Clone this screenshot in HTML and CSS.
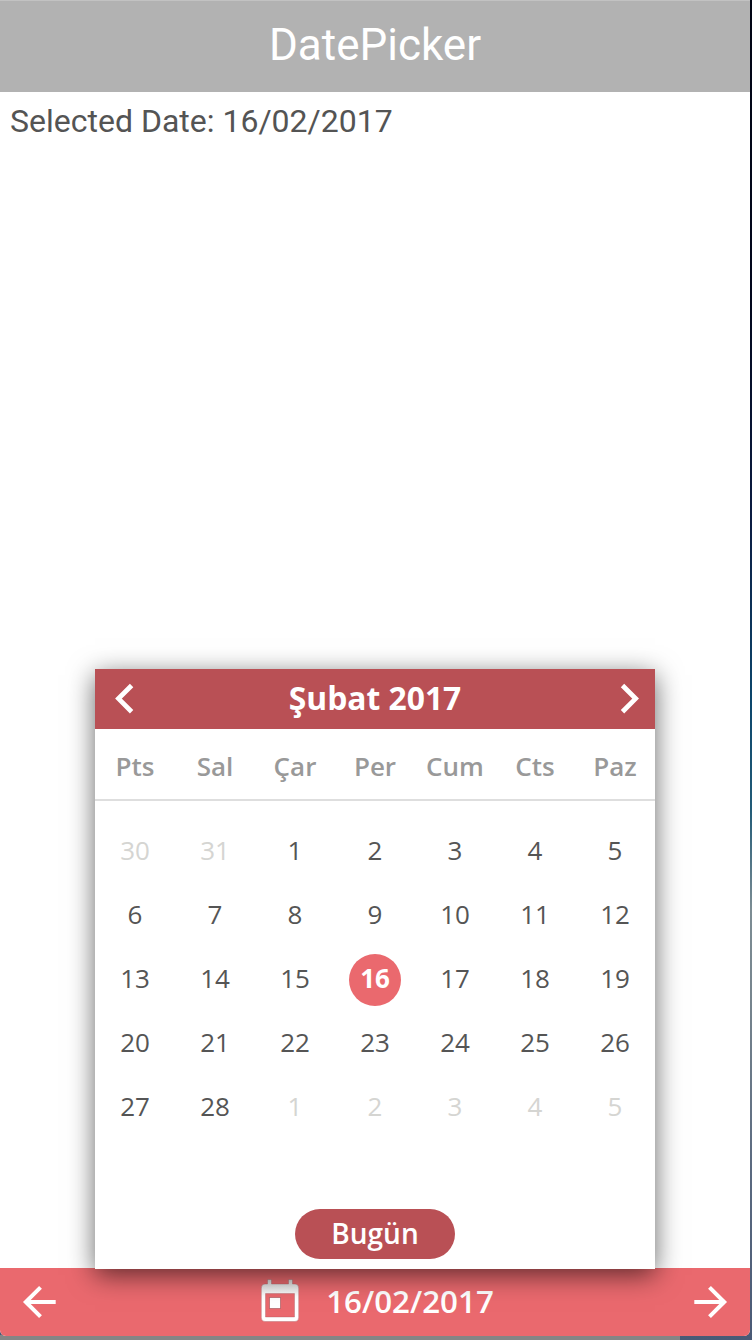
FILE: index.html
```html
<!DOCTYPE html>
<html lang="tr">
<head>
<meta charset="utf-8">
<title>DatePicker</title>
<link rel="stylesheet" href="styles.css">
</head>
<body>
<div class="window">
  <header class="titlebar">DatePicker</header>
  <main class="content"><span class="selected">Selected Date: 16/02/2017</span></main>
  <footer class="toolbar">
    <svg class="arrow" viewBox="0 0 36 36"><path d="M34.700 18H4.800M19.500 3.300 4.800 18l14.700 14.700"/></svg>
    <div class="current">
      <svg class="calendar-icon" viewBox="0 0 38 43">
        <defs><linearGradient id="shade" x1="0" y1="0" x2="0" y2="1"><stop offset="0" stop-color="#d8d8d8"/><stop offset=".4" stop-color="#fff"/></linearGradient></defs>
        <path fill="url(#shade)" stroke="#9c5055" stroke-opacity=".55" stroke-width=".6" fill-rule="evenodd" d="M4 5H6.500V.5H10.500V5H27.500V.5H31.500V5H34Q37.700 5 37.700 9V38.500Q37.700 42.500 34 42.500H4Q.3 42.500 .3 38.500V9Q.3 5 4 5ZM4.500 14.500V38H33.500V14.500Z"/>
        <rect x="8.500" y="18.500" width="11" height="11" fill="#fff" stroke="#9c5055" stroke-opacity=".6"/>
      </svg>
      <span class="current-date">16/02/2017</span>
    </div>
    <svg class="arrow" viewBox="0 0 36 36"><path d="M1.300 18H31.200M16.500 3.300 31.200 18 16.500 32.700"/></svg>
  </footer>
  <section class="popup">
    <div class="month">
      <svg class="chevron" viewBox="0 0 20 30"><path d="M18.600 1.500 5.500 14.600 18.600 27.700"/></svg>
      <span class="month-name">Şubat 2017</span>
      <svg class="chevron" viewBox="0 0 20 30"><path d="M5.500 1.500 18.600 14.600 5.500 27.700"/></svg>
    </div>
    <div class="weekdays"><span>Pts</span><span>Sal</span><span>Çar</span><span>Per</span><span>Cum</span><span>Cts</span><span>Paz</span></div>
    <div class="days">
      <span class="other">30</span><span class="other">31</span><span>1</span><span>2</span><span>3</span><span>4</span><span>5</span>
      <span>6</span><span>7</span><span>8</span><span>9</span><span>10</span><span>11</span><span>12</span>
      <span>13</span><span>14</span><span>15</span><span class="active">16</span><span>17</span><span>18</span><span>19</span>
      <span>20</span><span>21</span><span>22</span><span>23</span><span>24</span><span>25</span><span>26</span>
      <span>27</span><span>28</span><span class="other">1</span><span class="other">2</span><span class="other">3</span><span class="other">4</span><span class="other">5</span>
    </div>
    <button class="today">Bugün</button>
  </section>
</div>
</body>
</html>
```
FILE: styles.css
```css
* { box-sizing: border-box; }
body {
  margin: 0;
  width: 752px;
  height: 1340px;
  overflow: hidden;
  font-family: "Open Sans", "Noto Sans", sans-serif;
  background:
    linear-gradient(90deg, #858585 680px, transparent 680px) 0 1335px / 752px 5px no-repeat,
    linear-gradient(#020514 0, #02071c 300px, #0b1c42 520px, #0c466c 700px, #235c78 810px, #7d8d94 910px, #77858e 1000px, #5b6a80 1170px, #4a5a76 1340px);
}
.window {
  position: relative;
  width: 750px;
  height: 1336px;
  display: flex;
  flex-direction: column;
  background: #fff;
  border-radius: 0 0 6px 6px;
  overflow: hidden;
}
.titlebar {
  height: 92px;
  flex: none;
  border-top: 1px solid #c2c2c2;
  background: #b2b2b2;
  color: #fff;
  font: 44px/88px Roboto, sans-serif;
  text-align: center;
}
.content { flex: 1; padding: 9px 10px; }
.selected { display: block; font: 32px/40px Roboto, sans-serif; color: #545454; }
.toolbar {
  height: 68px;
  flex: none;
  display: flex;
  align-items: center;
  justify-content: space-between;
  padding: 0 21px;
  background: #ea696e;
}
.arrow { width: 36px; height: 36px; fill: none; stroke: #fff; stroke-width: 4; }
.current { display: flex; align-items: center; gap: 27px; padding-left: 5px; }
.calendar-icon { width: 38px; height: 43px; margin-bottom: 4px; }
.current-date { font-size: 31.300px; line-height: 44px; font-weight: 600; color: #fff; margin-bottom: 2px; }
.popup {
  position: absolute;
  left: 95px;
  top: 669px;
  width: 560px;
  height: 600px;
  display: flex;
  flex-direction: column;
  align-items: center;
  background: #fff;
  box-shadow: 0 6px 25px rgba(0, 0, 0, .6);
}
.month {
  width: 100%;
  height: 60px;
  display: flex;
  align-items: center;
  justify-content: space-between;
  padding: 0 18px;
  background: #b95055;
  color: #fff;
}
.month-name { font-size: 31.800px; line-height: 44px; font-weight: 700; margin-bottom: 2px; }
.chevron { width: 20px; height: 30px; overflow: visible; fill: none; stroke: #fff; stroke-width: 4.800; }
.weekdays, .days { display: grid; width: 100%; grid-template-columns: repeat(7, 1fr); justify-items: center; align-items: center; }
.weekdays { height: 72px; border-bottom: 2px solid #dedede; padding-top: 4px; font-size: 26px; font-weight: 600; color: #999; }
.days { padding-top: 19px; grid-auto-rows: 64px; font-size: 26px; color: #555; }
.days span { width: 52px; height: 52px; line-height: 48px; text-align: center; }
.days .other { color: #d5d5d2; }
.days .active { border-radius: 50%; background: #ea696e; color: #fff; font-weight: 700; }
.today {
  width: 160px;
  height: 50px;
  margin-top: 69px;
  padding: 0 0 3px;
  border: 0;
  border-radius: 25px;
  background: #b95055;
  color: #fff;
  font: 600 28px/46px "Open Sans", sans-serif;
}
```
